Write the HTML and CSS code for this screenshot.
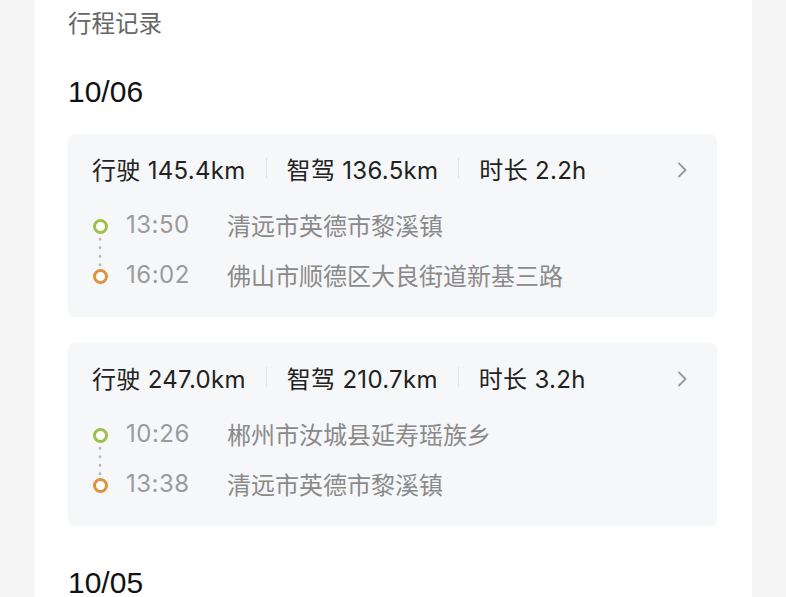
FILE: index.html
```html
<!DOCTYPE html>
<html lang="zh-CN">
<head>
  <meta charset="UTF-8">
  <title>行程记录</title>
  <link rel="stylesheet" href="styles.css">
</head>
<body>
  <div class="panel">
    <div class="title">行程记录</div>

    <div class="day">
      <div class="date">10/06</div>

      <div class="trip">
        <div class="trip-head">
          <span class="stat">行驶 145.4km</span>
          <span class="sep"></span>
          <span class="stat">智驾 136.5km</span>
          <span class="sep"></span>
          <span class="stat">时长 2.2h</span>
          <svg class="chevron" width="12" height="18" viewBox="0 0 12 18"><path d="M3 2.5l6.5 6.5-6.5 6.5" fill="none" stroke="#9a9a9a" stroke-width="1.8" stroke-linecap="round" stroke-linejoin="round"/></svg>
        </div>
        <div class="route">
          <div class="rail">
            <span class="ring start"></span>
            <span class="dots"></span>
            <span class="ring end"></span>
          </div>
          <div class="stops">
            <div class="stop"><span class="time">13:50</span><span class="place">清远市英德市黎溪镇</span></div>
            <div class="stop"><span class="time">16:02</span><span class="place">佛山市顺德区大良街道新基三路</span></div>
          </div>
        </div>
      </div>

      <div class="trip">
        <div class="trip-head">
          <span class="stat">行驶 247.0km</span>
          <span class="sep"></span>
          <span class="stat">智驾 210.7km</span>
          <span class="sep"></span>
          <span class="stat">时长 3.2h</span>
          <svg class="chevron" width="12" height="18" viewBox="0 0 12 18"><path d="M3 2.5l6.5 6.5-6.5 6.5" fill="none" stroke="#9a9a9a" stroke-width="1.8" stroke-linecap="round" stroke-linejoin="round"/></svg>
        </div>
        <div class="route">
          <div class="rail">
            <span class="ring start"></span>
            <span class="dots"></span>
            <span class="ring end"></span>
          </div>
          <div class="stops">
            <div class="stop"><span class="time">10:26</span><span class="place">郴州市汝城县延寿瑶族乡</span></div>
            <div class="stop"><span class="time">13:38</span><span class="place">清远市英德市黎溪镇</span></div>
          </div>
        </div>
      </div>
    </div>

    <div class="day">
      <div class="date">10/05</div>
    </div>
  </div>
</body>
</html>
```

FILE: styles.css
```css
body {
  margin: 0;
  background: #f5f5f6;
  font-family: Inter, "Noto Sans CJK SC", sans-serif;
  overflow: hidden;
}
.panel {
  margin-left: 34px;
  width: 718px;
  min-height: 597px;
  box-sizing: border-box;
  background: #fff;
  padding: 6px 35px 0 34px;
}
.title {
  font-family: "Noto Sans CJK SC", sans-serif;
  font-size: 23.5px;
  line-height: 32px;
  color: #666;
}
.day {
  margin-top: 34px;
}
.day + .day {
  margin-top: 37px;
}
.date {
  font-family: "Liberation Sans", Arial, sans-serif;
  font-size: 30px;
  line-height: 40px;
  color: #111;
  margin-bottom: 22px;
}
.trip {
  background: #f6f7f9;
  border-radius: 8px;
  box-shadow: 0 0 2px rgba(0, 0, 0, 0.04);
  padding: 18px 29px 27px 24px;
  margin-bottom: 26px;
}
.trip-head {
  display: flex;
  align-items: center;
  height: 32px;
  font-size: 24px;
  letter-spacing: 0.3px;
  color: #222;
}
.sep {
  width: 1px;
  height: 20px;
  background: #e2e2e4;
  margin: 0 20px;
}
.chevron {
  margin-left: auto;
  margin-top: 3px;
}
.route {
  display: flex;
  margin-top: 24px;
}
.rail {
  width: 16px;
  padding-top: 11px;
  display: flex;
  flex-direction: column;
  align-items: center;
}
.ring {
  width: 9px;
  height: 9px;
  border-radius: 50%;
  border: 3px solid;
  background: #fff;
}
.ring.start { border-color: #9cc04c; }
.ring.end { border-color: #e0923c; }
.dots {
  width: 4px;
  height: 35px;
  background-image: radial-gradient(circle, #b9b9bd 1.3px, transparent 1.7px);
  background-size: 4px 8.5px;
  background-position: 0 1px;
}
.stops {
  margin-left: 18px;
  display: flex;
  flex-direction: column;
  gap: 18px;
}
.stop {
  display: flex;
  align-items: center;
  height: 32px;
  font-size: 24px;
  letter-spacing: 0.5px;
}
.time {
  width: 101px;
  color: #9b9b9b;
}
.place {
  font-family: "Noto Sans CJK SC", sans-serif;
  font-size: 24px;
  letter-spacing: 0;
  color: #8a8a8a;
}
```
